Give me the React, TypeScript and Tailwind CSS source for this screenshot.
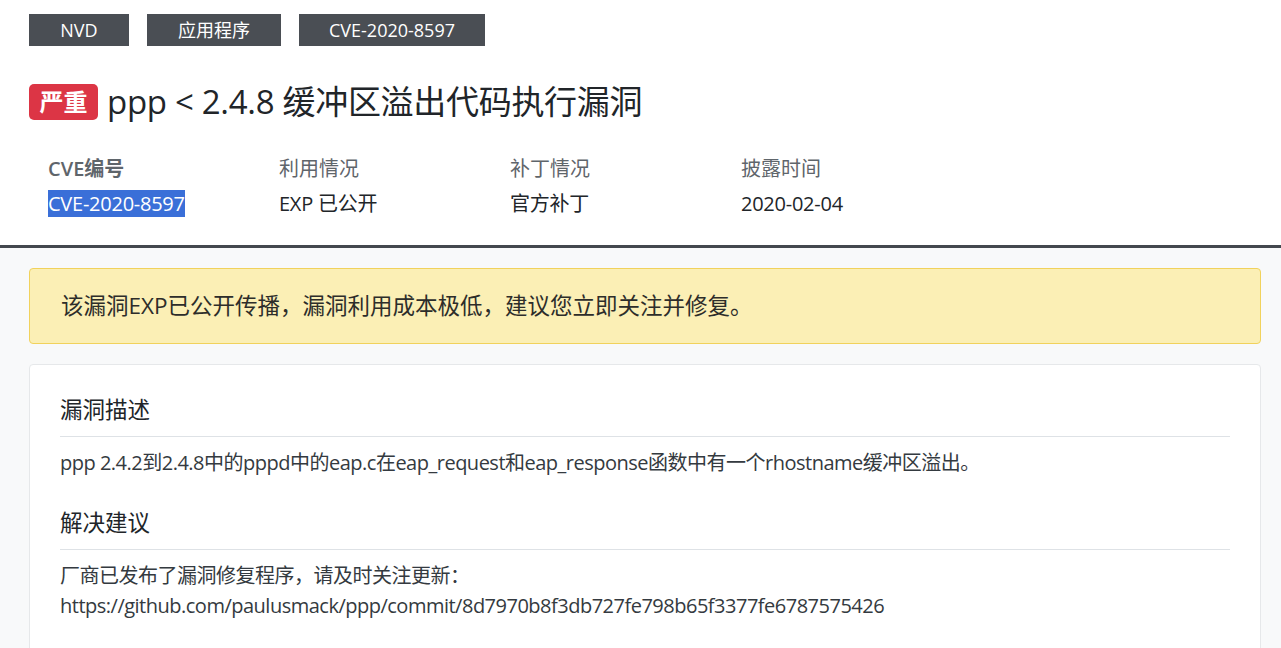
import React from 'react';

const FONT = '"Open Sans", "Noto Sans CJK SC", sans-serif';

const tags = ['NVD', '应用程序', 'CVE-2020-8597'];

const infos = [
    { label: 'CVE编号', value: 'CVE-2020-8597', selected: true },
    { label: '利用情况', value: 'EXP 已公开' },
    { label: '补丁情况', value: '官方补丁' },
    { label: '披露时间', value: '2020-02-04' },
];

function Section({ title, children }: { title: string; children: React.ReactNode }) {
    return (
        <div>
            <h5 className="text-[22.5px] leading-[30px] text-[#212529] pb-[11px] border-b border-[#dee2e6]">{title}</h5>
            <div className="pt-[11px] text-[20px] leading-[30px] tracking-[-0.5px] text-[#343a40]">{children}</div>
        </div>
    );
}

export default function App() {
    return (
        <div className="w-[1281px] h-[648px] overflow-hidden bg-[#f8f9fa]" style={{ fontFamily: FONT }}>
            {/* header */}
            <div className="bg-white border-b-[3px] border-[#43484e] px-[29px] pt-[14px] pb-[28px]">
                <div className="flex gap-[18px]">
                    {tags.map((t, i) => (
                        <span
                            key={t}
                            className={`h-[32px] flex items-center justify-center bg-[#4a4e54] text-white text-[18px] ${
                                i === 0 ? 'w-[100px]' : i === 1 ? 'w-[134px]' : 'w-[186px]'
                            }`}
                        >
                            {t}
                        </span>
                    ))}
                </div>

                <div className="flex items-center mt-[38px] h-[36px]">
                    <span className="w-[69px] h-[36px] rounded-[5px] bg-[#dc3545] text-white text-[24px] font-bold flex items-center justify-center">
                        严重
                    </span>
                    <h1 className="ml-[9px] text-[33px] leading-[40px] tracking-[-0.3px] text-[#212529]">ppp &lt; 2.4.8 缓冲区溢出代码执行漏洞</h1>
                </div>

                <div className="grid grid-cols-[231px_231px_231px_231px] pl-[19px] mt-[34px]">
                    {infos.map((it) => (
                        <div key={it.label} className="flex flex-col">
                            <span className={`text-[20px] leading-[30px] text-[#5f656b] ${it.label === 'CVE编号' ? 'font-semibold' : ''}`}>
                                {it.label}
                            </span>
                            <span className="mt-[7px] text-[20px] leading-[26px] tracking-[-0.25px] text-[#212529]">
                                {it.selected ? (
                                    <span className="bg-[#3a6fd8] text-white">{it.value}</span>
                                ) : (
                                    it.value
                                )}
                            </span>
                        </div>
                    ))}
                </div>
            </div>

            {/* body */}
            <div className="px-[29px] pt-[20px] pr-[20px]">
                <div className="h-[76px] flex items-center px-[31px] bg-[#fbefb5] border border-[#f1d25c] rounded-[4px] text-[22.5px] text-[#2d2d2a]">
                    该漏洞EXP已公开传播，漏洞利用成本极低，建议您立即关注并修复。
                </div>

                <div className="mt-[20px] bg-white border border-[#e6e8ea] rounded-[4px] px-[30px] pt-[30px] pb-[80px] flex flex-col gap-[30px]">
                    <Section title="漏洞描述">
                        ppp 2.4.2到2.4.8中的pppd中的eap.c在eap_request和eap_response函数中有一个rhostname缓冲区溢出。
                    </Section>
                    <Section title="解决建议">
                        厂商已发布了漏洞修复程序，请及时关注更新：
                        <br />
                        https://github.com/paulusmack/ppp/commit/8d7970b8f3db727fe798b65f3377fe6787575426
                    </Section>
                </div>
            </div>
        </div>
    );
}
